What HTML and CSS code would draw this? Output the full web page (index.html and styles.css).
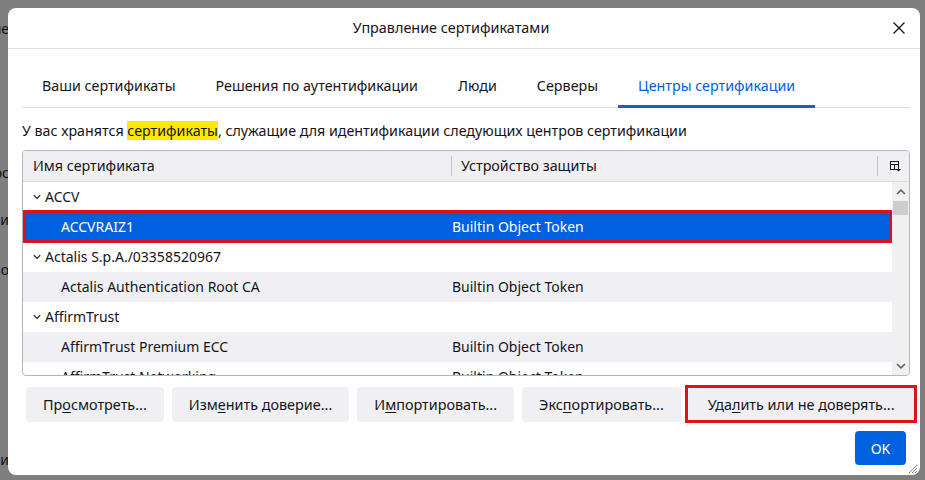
FILE: index.html
```html
<!DOCTYPE html>
<html lang="ru">
<head>
<meta charset="utf-8">
<title>Управление сертификатами</title>
<link rel="stylesheet" href="styles.css">
</head>
<body>
<div class="page">
  <div class="frag f1"><span>Личные</span></div>
  <div class="frag f2"><span>Запрос</span></div>
  <div class="frag f3"><span>Времени</span></div>
  <div class="frag f4"><span>Устройство</span></div>
  <div class="frag f5"><span>Сертификации</span></div>
</div>

<div class="dialog">
  <header class="dlg-head">
    <span></span>
    <h1 class="dlg-title">Управление сертификатами</h1>
    <button class="close-btn" aria-label="Закрыть">
      <svg width="14" height="14" viewBox="0 0 14 14"><path d="M1.5 1.5 L12.5 12.5 M12.5 1.5 L1.5 12.5" stroke="#15141a" stroke-width="1.3" fill="none"/></svg>
    </button>
  </header>

  <div class="dlg-body">
    <nav class="tabs">
      <span class="tab">Ваши сертификаты</span>
      <span class="tab">Решения по аутентификации</span>
      <span class="tab">Люди</span>
      <span class="tab">Серверы</span>
      <span class="tab active">Центры сертификации</span>
    </nav>

    <p class="desc">У вас хранятся <mark>сертификаты</mark>, служащие для идентификации следующих центров сертификации</p>

    <div class="tree">
      <div class="tree-head">
        <div class="hcol first">Имя сертификата</div>
        <div class="hsep"></div>
        <div class="hcol second">Устройство защиты</div>
        <div class="hsep"></div>
        <div class="picker">
          <svg width="12" height="12" viewBox="0 0 12 12"><rect x="1.5" y="1.5" width="8" height="8" fill="none" stroke="#15141a" stroke-width="1"/><path d="M1.5 4.5 H9.5 M5.5 4.5 V9.5" stroke="#15141a" stroke-width="1" fill="none"/><path d="M7 9 H12 L9.5 11.5 Z" fill="#15141a"/></svg>
        </div>
      </div>
      <div class="tree-body">
        <div class="rows">
          <div class="row group"><span class="cell c1"><svg class="chev" width="8" height="6" viewBox="0 0 8 6"><path d="M0.8 1.2 L4 4.4 L7.2 1.2" stroke="#15141a" stroke-width="1.1" fill="none"/></svg>ACCV</span><span class="cell c2"></span></div>
          <div class="row child alt selected"><span class="cell c1">ACCVRAIZ1</span><span class="cell c2">Builtin Object Token</span></div>
          <div class="row group"><span class="cell c1"><svg class="chev" width="8" height="6" viewBox="0 0 8 6"><path d="M0.8 1.2 L4 4.4 L7.2 1.2" stroke="#15141a" stroke-width="1.1" fill="none"/></svg>Actalis S.p.A./03358520967</span><span class="cell c2"></span></div>
          <div class="row child alt"><span class="cell c1">Actalis Authentication Root CA</span><span class="cell c2">Builtin Object Token</span></div>
          <div class="row group"><span class="cell c1"><svg class="chev" width="8" height="6" viewBox="0 0 8 6"><path d="M0.8 1.2 L4 4.4 L7.2 1.2" stroke="#15141a" stroke-width="1.1" fill="none"/></svg>AffirmTrust</span><span class="cell c2"></span></div>
          <div class="row child alt"><span class="cell c1">AffirmTrust Premium ECC</span><span class="cell c2">Builtin Object Token</span></div>
          <div class="row child"><span class="cell c1">AffirmTrust Networking</span><span class="cell c2">Builtin Object Token</span></div>
        </div>
        <div class="scrollbar">
          <div class="sb-btn">
            <svg width="10" height="6" viewBox="0 0 10 6"><path d="M1 5 L5 1.2 L9 5" stroke="#5f5f5f" stroke-width="1.6" fill="none"/></svg>
          </div>
          <div class="sb-thumb"></div>
          <div class="sb-track"></div>
          <div class="sb-btn">
            <svg width="10" height="6" viewBox="0 0 10 6"><path d="M1 1 L5 4.8 L9 1" stroke="#5f5f5f" stroke-width="1.6" fill="none"/></svg>
          </div>
        </div>
      </div>
    </div>

    <div class="actions">
      <button class="btn">Пр<u>о</u>смотреть...</button>
      <button class="btn">Изм<u>е</u>нить доверие...</button>
      <button class="btn">И<u>м</u>портировать...</button>
      <button class="btn">Экс<u>п</u>ортировать...</button>
      <button class="btn marked">Уда<u>л</u>ить или не доверять...</button>
    </div>

    <div class="footer">
      <button class="ok">OK</button>
    </div>
  </div>

  <div class="grip">
    <svg width="12" height="12" viewBox="0 0 12 12"><path d="M11 3 L3 11 M11 6 L6 11 M11 9 L9 11" stroke="#8a8a8a" stroke-width="1" fill="none"/></svg>
  </div>
</div>
</body>
</html>
```

FILE: styles.css
```css
* {
  box-sizing: border-box;
  margin: 0;
  padding: 0;
}

html, body {
  height: 100%;
}

body {
  background: #7f7f7f;
  font-family: "Noto Sans", "DejaVu Sans", sans-serif;
  font-size: 14px;
  color: #15141a;
  overflow: hidden;
}

/* underlying page (mostly hidden by the dialog) */
.page {
  display: flex;
  flex-direction: column;
  width: 9px;
  overflow: hidden;
}

.frag {
  display: flex;
  justify-content: flex-end;
  white-space: nowrap;
  height: 20px;
  line-height: 20px;
  color: #111;
}

.f1 { margin-top: 19px; }
.f2 { margin-top: 124px; }
.f3 { margin-top: 27px; }
.f4 { margin-top: 30px; }
.f5 { margin-top: 170px; }

/* dialog */
.dialog {
  position: absolute;
  left: 8px;
  top: 8px;
  width: 912px;
  height: 467px;
  background: #ffffff;
  border-radius: 8px;
  display: flex;
  flex-direction: column;
  overflow: hidden;
}

.dlg-head {
  height: 41px;
  border-bottom: 1px solid #e0e0e6;
  display: grid;
  grid-template-columns: 1fr auto 1fr;
  align-items: center;
}

.dlg-title {
  font-size: 14.4px;
  font-weight: 400;
  line-height: 40px;
  margin-right: 26px;
}

.close-btn {
  justify-self: end;
  margin-right: 14px;
  width: 14px;
  height: 14px;
  border: none;
  background: transparent;
  display: flex;
}

.dlg-body {
  padding: 15px 10px 0 14px;
  display: flex;
  flex-direction: column;
}

/* tabs */
.tabs {
  display: flex;
  border-bottom: 1px solid #dcdce2;
  font-size: 14.3px;
}

.tab {
  padding: 12px 20px 9px;
  line-height: 20px;
  border-bottom: 3px solid transparent;
  margin-bottom: -1px;
}

.tab.active {
  color: #0061e0;
  border-bottom-color: #1f5fb8;
}

.desc {
  margin-top: 13px;
  line-height: 20px;
  font-size: 14.25px;
}

.desc mark {
  background: #ffe900;
  color: inherit;
}

/* tree */
.tree {
  margin-top: 9px;
  border: 1px solid #b5b5bc;
  border-radius: 4px;
  overflow: hidden;
}

.tree-head {
  display: grid;
  grid-template-columns: 428px 1px 425px 1px 1fr;
  align-items: center;
  height: 31px;
  background: #f0f0f4;
  border-bottom: 1px solid #dcdce0;
  font-size: 14.3px;
}

.hcol {
  line-height: 30px;
  white-space: nowrap;
}

.hcol.first { padding-left: 10px; }
.hcol.second { padding-left: 9px; }

.hsep {
  height: 20px;
  background: #c2c2c8;
}

.picker {
  display: flex;
  justify-content: center;
  align-items: center;
  padding-left: 2px;
}

.tree-body {
  display: flex;
  height: 193px;
}

.rows {
  flex: 1;
  overflow: hidden;
}

.row {
  display: grid;
  grid-template-columns: 428px 1fr;
  height: 30px;
  line-height: 30px;
  white-space: nowrap;
  position: relative;
}

.row.alt { background: #f0f0f4; }

.row.group .c1 {
  padding-left: 10px;
  display: flex;
  align-items: center;
}

.chev { margin-right: 4px; }

.row.child .c1 { padding-left: 38px; }
.row .c2 { padding-left: 1px; }

.row.selected {
  background: #0061e0;
  color: #ffffff;
}

.row.selected::before {
  content: "";
  position: absolute;
  left: 0;
  right: 0;
  top: 0;
  border-top: 1px dashed #ffffff;
}

.row.selected::after {
  content: "";
  position: absolute;
  left: 0;
  right: 0;
  top: -2px;
  bottom: -1px;
  border: 3px solid #e0101c;
}

/* scrollbar */
.scrollbar {
  width: 17px;
  background: #f0f0f0;
  display: flex;
  flex-direction: column;
}

.sb-btn {
  height: 19px;
  display: flex;
  align-items: center;
  justify-content: center;
}

.sb-thumb {
  height: 14px;
  background: #cdcdcd;
  margin: 0 1px;
}

.sb-track { flex: 1; }

/* buttons */
.actions {
  margin-top: 11px;
  padding: 0 4px;
  display: flex;
  gap: 8px;
}

.btn {
  height: 35px;
  padding: 0 17px;
  font-family: inherit;
  font-size: 14.4px;
  color: #15141a;
  background: #f0f0f4;
  border: none;
  border-radius: 4px;
  white-space: nowrap;
  position: relative;
}

.btn u { text-underline-offset: 2px; }

.btn.marked {
  margin-left: auto;
  padding: 0 19px;
}

.btn.marked::after {
  content: "";
  position: absolute;
  left: -4px;
  right: -3px;
  top: -2px;
  bottom: -1px;
  border: 3px solid #e0101c;
}

.footer {
  margin-top: 9px;
  padding-right: 4px;
  display: flex;
  justify-content: flex-end;
}

.ok {
  width: 51px;
  height: 34px;
  border: none;
  border-radius: 4px;
  background: #0061e0;
  color: #ffffff;
  font-family: inherit;
  font-size: 14px;
}

.grip {
  position: absolute;
  right: 2px;
  bottom: 1px;
  display: flex;
}
```
